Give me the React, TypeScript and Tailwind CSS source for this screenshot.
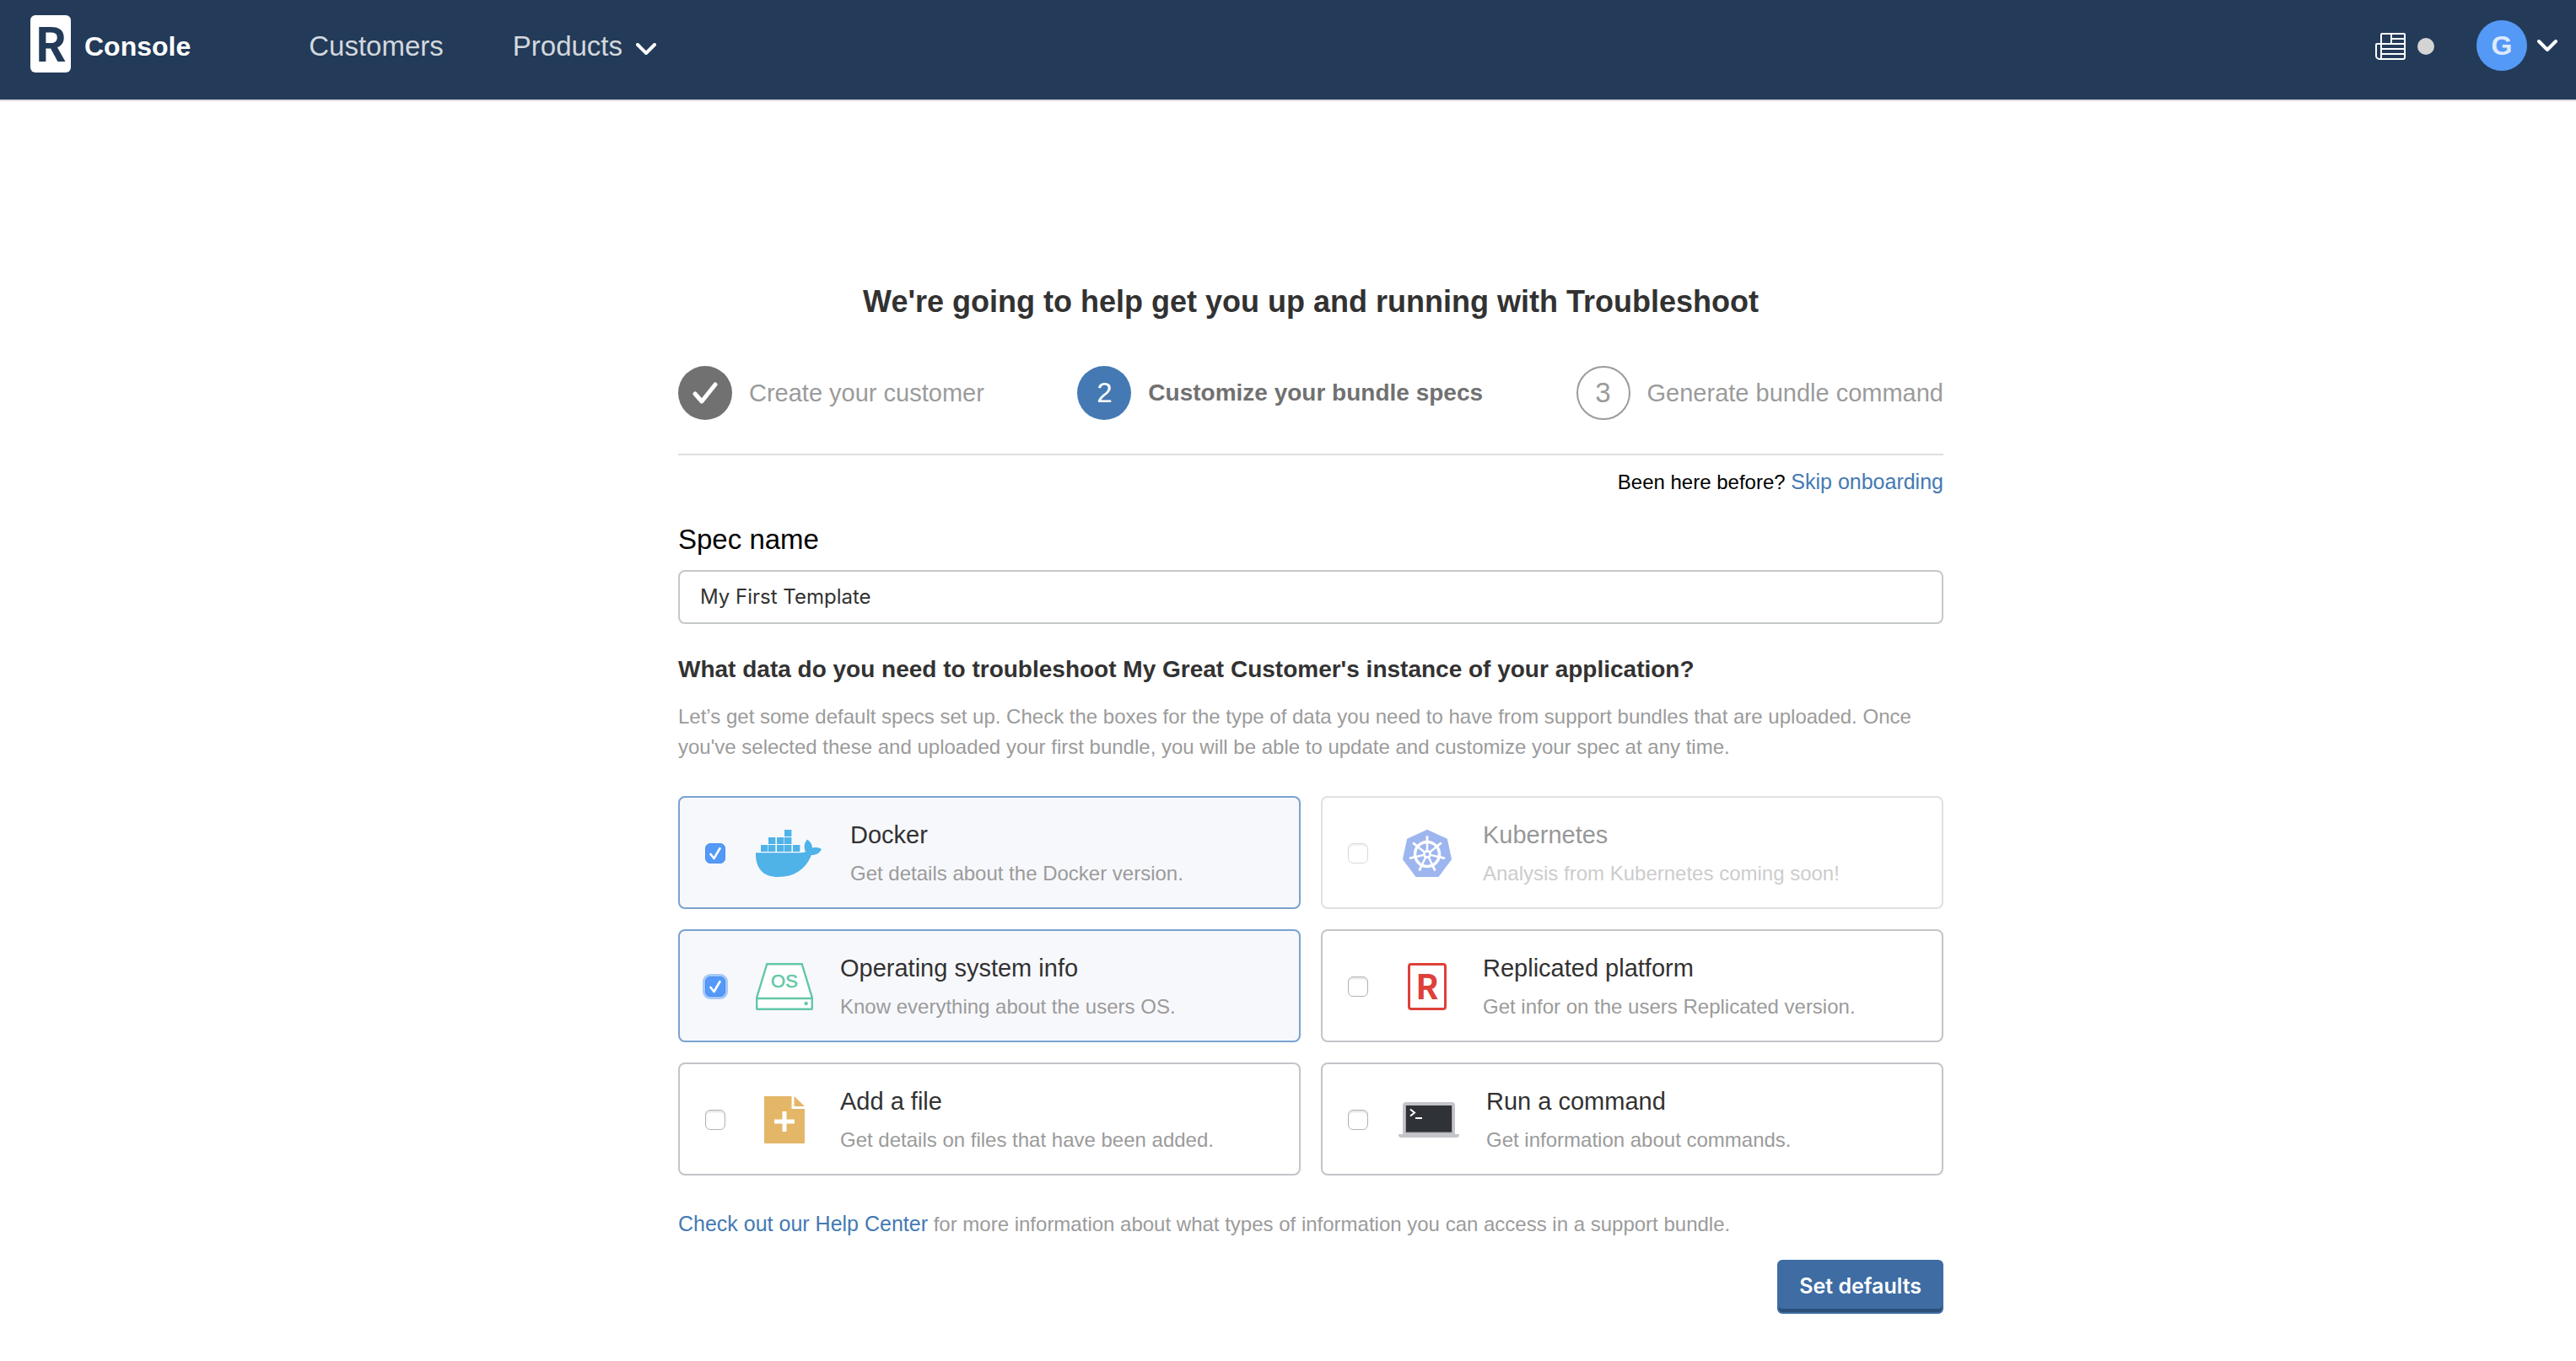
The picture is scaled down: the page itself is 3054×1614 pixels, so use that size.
import { useState } from "react";
import type { ReactNode } from "react";

function Chevron({ className }: { className: string }) {
  return (
    <svg viewBox="0 0 24 14" className={className} fill="none" stroke="white" strokeWidth="4" strokeLinecap="round" strokeLinejoin="round" aria-hidden="true">
      <path d="M2 2l10 10L22 2" />
    </svg>
  );
}

function NewsIcon() {
  return (
    <svg viewBox="0 0 36 32" className="h-8 w-9" fill="none" stroke="white" strokeWidth="2" aria-hidden="true">
      <path d="M7 31V2a1 1 0 0 1 1-1h26a1 1 0 0 1 1 1v27a2 2 0 0 1-2 2H5a4 4 0 0 1-4-4V14a1 1 0 0 1 1-1h33" />
      <path d="M19 1v12M19 7h16M7 19h28M7 25h28" />
    </svg>
  );
}

function DockerIcon() {
  const boxes = [
    [34, 0], [15, 9], [25, 9], [34, 9],
    [6, 18], [15, 18], [25, 18], [34, 18], [44, 18],
  ];
  return (
    <svg viewBox="0 0 80 56" className="h-14 w-20" fill="#50b3e8" aria-hidden="true">
      {boxes.map(([x, y]) => (
        <rect key={`${x}-${y}`} x={x} y={y} width="8.400" height="8" />
      ))}
      <path d="M0 27.300h53c2.500 0 4.500-.4 6.200-1.200C56.600 21.500 57.200 15.500 61 11.500c3.600 2.500 6 5.800 6 10 3.600-.8 8.300-.5 11 1.500-2 4.700-6.300 7.100-12 7C59.500 46.500 46 56 26.500 56 8.500 56-.5 45.500 0 27.300z" />
    </svg>
  );
}

function OsIcon() {
  return (
    <svg viewBox="0 0 68 56" className="h-14 w-[68px]" aria-hidden="true">
      <path d="M13.300 1.200h41.400L66.800 41v13.300a.5.5 0 0 1-.5.5H1.700a.5.5 0 0 1-.5-.5V41z" fill="white" stroke="#62c7a8" strokeWidth="2.400" />
      <path d="M1 42h66" stroke="#62c7a8" strokeWidth="2.600" />
      <circle cx="59.700" cy="48" r="2.200" fill="#62c7a8" />
      <text x="34" y="29" textAnchor="middle" fill="#62c7a8" stroke="#62c7a8" strokeWidth="0.500" fontSize="22" fontFamily="Liberation Sans, sans-serif">OS</text>
    </svg>
  );
}

function FileIcon() {
  return (
    <svg viewBox="0 0 48 56" className="h-14 w-12" aria-hidden="true">
      <path d="M1 0h31.500v15H48v40a1 1 0 0 1-1 1H1a1 1 0 0 1-1-1V1a1 1 0 0 1 1-1z" fill="#e4b668" />
      <path d="M35.500 0v12H48z" fill="#e4b668" />
      <path d="M24 18v24M12 30h24" stroke="white" strokeWidth="5" />
    </svg>
  );
}

function KubernetesIcon() {
  const spokes = [0, 1, 2, 3, 4, 5, 6].map((i) => (i * 360) / 7);
  return (
    <svg viewBox="0 0 58 56" className="h-14 w-[58px]" aria-hidden="true">
      <path d="M29 1L52 11.500 57 35 42 55H16L1 35 6 11.500z" fill="#3f6fe0" stroke="#3f6fe0" strokeWidth="2" strokeLinejoin="round" />
      <circle cx="29" cy="29" r="14.500" fill="none" stroke="white" strokeWidth="3.400" />
      {spokes.map((a) => (
        <g key={a} transform={`rotate(${a} 29 29)`} stroke="white" strokeLinecap="round">
          <path d="M29 14V8.500" strokeWidth="2.800" />
          <path d="M29 25V14.500" strokeWidth="2.400" />
        </g>
      ))}
      <circle cx="29" cy="29" r="3.700" fill="none" stroke="white" strokeWidth="2.800" />
    </svg>
  );
}

function ReplicatedIcon() {
  return (
    <span className="flex h-14 w-[46px] items-center justify-center rounded-sm border-3 border-[#df4038] bg-white pb-1 font-['Noto_Sans_CJK_SC',sans-serif] text-[40px] leading-none font-bold text-[#df4038]" aria-hidden="true">
      R
    </span>
  );
}

function TerminalIcon() {
  return (
    <svg viewBox="0 0 72 42" className="h-[42px] w-[72px]" aria-hidden="true">
      <path d="M5 38V4a4 4 0 0 1 4-4h54a4 4 0 0 1 4 4v34h5v1c0 2-1.500 3-3 3H3c-1.500 0-3-1-3-3v-1z" fill="#c4c4ca" />
      <path d="M8 4h56v32.500H8z" fill="#a2a3a9" />
      <path d="M9 4h54v31.500H9z" fill="#2f3237" />
      <path d="M14 8.500l5 4-5 4" fill="none" stroke="white" strokeWidth="2" />
      <path d="M20 19h8" stroke="white" strokeWidth="2" />
    </svg>
  );
}

type Item = {
  id: string;
  title: string;
  text: string;
  icon: ReactNode;
  disabled?: boolean;
  focused?: boolean;
};

const items: Item[] = [
  { id: "docker", title: "Docker", text: "Get details about the Docker version.", icon: <DockerIcon /> },
  { id: "kubernetes", title: "Kubernetes", text: "Analysis from Kubernetes coming soon!", icon: <KubernetesIcon />, disabled: true },
  { id: "os", title: "Operating system info", text: "Know everything about the users OS.", icon: <OsIcon />, focused: true },
  { id: "replicated", title: "Replicated platform", text: "Get infor on the users Replicated version.", icon: <ReplicatedIcon /> },
  { id: "file", title: "Add a file", text: "Get details on files that have been added.", icon: <FileIcon /> },
  { id: "command", title: "Run a command", text: "Get information about commands.", icon: <TerminalIcon /> },
];

function Card({ item, checked, onToggle }: { item: Item; checked: boolean; onToggle: () => void }) {
  const frame = item.disabled
    ? "border-[#c4c4c9] opacity-50"
    : checked
      ? "border-[#7aa2cf] bg-[#f7f8fc]"
      : "border-[#c4c4ca]";
  const box = checked
    ? "border-[#4a8df0] bg-[#5499f8]"
    : "border-[#b4b4b4] bg-white shadow-[inset_0_2px_2px_#e4e4e4]";
  return (
    <label htmlFor={item.id} className={`flex items-center rounded-lg border-2 pt-[26px] pb-6 pl-[30px] ${frame}`}>
      <span className="grid">
        <input
          id={item.id}
          type="checkbox"
          checked={checked}
          disabled={item.disabled}
          onChange={onToggle}
          className={`size-6 appearance-none rounded-md border [grid-area:1/1] ${box} ${item.focused ? "ring-3 ring-[#a5c8f8]" : ""}`}
        />
        {checked && (
          <svg viewBox="0 0 24 24" className="pointer-events-none size-6 [grid-area:1/1]" fill="none" stroke="white" strokeWidth="2.600" strokeLinecap="round" strokeLinejoin="round" aria-hidden="true">
            <path d="M6.500 13l4 5L17.500 6" />
          </svg>
        )}
      </span>
      <span className="ml-9 flex min-w-[68px] justify-center">{item.icon}</span>
      <span className="ml-8 flex flex-col gap-3">
        <span className="text-[29px] leading-9 text-[#323232]">{item.title}</span>
        <span className="text-2xl leading-8 text-[#9b9b9b]">{item.text}</span>
      </span>
    </label>
  );
}

export default function App() {
  const [name, setName] = useState("My First Template");
  const [checked, setChecked] = useState<Record<string, boolean>>({ docker: true, os: true });

  return (
    <div className="min-h-screen bg-white font-['Liberation_Sans',Arial,sans-serif] text-black">
      <header className="flex items-center border-b-2 border-[#dcd9df] bg-[#233b59] pt-[18px] pr-[22px] pb-[26px] pl-9">
        <a href="#home" className="flex items-center gap-4 text-white">
          <span className="mb-1.5 flex h-[68px] w-12 items-center justify-center rounded-md bg-white pb-1.5 font-['Noto_Sans_CJK_SC',sans-serif] text-[55px] leading-none font-bold text-[#233b59]">
            R
          </span>
          <span className="text-[32px] leading-10 font-bold">Console</span>
        </a>
        <nav className="ml-[140px] flex items-center gap-[82px] text-[33px] leading-10 text-[#d3d8de]">
          <a href="#customers">Customers</a>
          <button type="button" className="flex items-center gap-4">
            Products
            <Chevron className="mt-1.5 h-3.5 w-6" />
          </button>
        </nav>
        <div className="ml-auto flex items-center">
          <button type="button" aria-label="News" className="flex items-center gap-3.5">
            <NewsIcon />
            <span className="size-5 rounded-full bg-[#d4d4d4]" />
          </button>
          <button type="button" aria-label="Account" className="mb-0.5 ml-[50px] flex items-center gap-3">
            <span className="flex size-[60px] items-center justify-center rounded-full bg-[#5499f5] text-[32px] leading-10 font-bold text-[#dde9fd]">G</span>
            <Chevron className="h-3.5 w-6" />
          </button>
        </div>
      </header>

      <main className="pt-[216px] pb-14 pl-[54px]">
        <div className="mx-auto flex w-full max-w-[1500px] flex-col">
          <h1 className="text-center text-4xl leading-11 font-bold text-[#323232]">
            We're going to help get you up and running with Troubleshoot
          </h1>

          <ol className="mt-[54px] flex justify-between border-b-2 border-[#dfdfdf] pb-10 text-[29px] leading-9 text-[#9b9b9b]">
            <li className="flex items-center gap-5">
              <span className="flex size-16 items-center justify-center rounded-full bg-[#717171]">
                <svg viewBox="0 0 30 26" className="h-[26px] w-[30px]" fill="none" stroke="white" strokeWidth="5" strokeLinecap="round" strokeLinejoin="round" aria-hidden="true">
                  <path d="M3 14l8 9L27 3" />
                </svg>
              </span>
              Create your customer
            </li>
            <li className="flex items-center gap-5 text-[28px] font-bold text-[#717171]" aria-current="step">
              <span className="flex size-16 items-center justify-center rounded-full bg-[#4479b3] text-[33px] font-normal text-white">2</span>
              Customize your bundle specs
            </li>
            <li className="flex items-center gap-5">
              <span className="flex size-16 items-center justify-center rounded-full border-2 border-[#9b9b9b] text-[33px]">3</span>
              Generate bundle command
            </li>
          </ol>

          <p className="mt-4 text-right text-2xl leading-8">
            Been here before?{" "}
            <a href="#skip" className="text-[25px] leading-none text-[#4479b3]">Skip onboarding</a>
          </p>

          <label htmlFor="spec-name" className="mt-8 text-[33px] leading-10">Spec name</label>
          <input
            id="spec-name"
            type="text"
            value={name}
            onChange={(e) => setName(e.target.value)}
            className="mt-4 h-16 rounded-lg border-2 border-[#c4c8ca] px-6 pb-0.5 font-['Inter',sans-serif] text-2xl text-[#323232] outline-none"
          />

          <h2 className="mt-9 text-[28px] leading-9 font-bold text-[#323232]">
            What data do you need to troubleshoot My Great Customer's instance of your application?
          </h2>
          <p className="mt-5 text-2xl leading-9 text-[#9b9b9b]">
            Let’s get some default specs set up. Check the boxes for the type of data you need to have from support bundles that are uploaded. Once
            you've selected these and uploaded your first bundle, you will be able to update and customize your spec at any time.
          </p>

          <div className="mt-10 grid grid-cols-2 gap-6">
            {items.map((item) => (
              <Card
                key={item.id}
                item={item}
                checked={!!checked[item.id]}
                onToggle={() => setChecked((c) => ({ ...c, [item.id]: !c[item.id] }))}
              />
            ))}
          </div>

          <p className="mt-[42px] text-2xl leading-8 text-[#9b9b9b]">
            <a href="#help" className="text-[25px] leading-none text-[#4479b3]">Check out our Help Center</a>{" "}
            for more information about what types of information you can access in a support bundle.
          </p>
          <button
            type="button"
            className="mt-[26px] h-16 self-end rounded-md border-2 border-[#3e6ca3] bg-[#3e6ca3] px-6 font-['Inter',sans-serif] text-[25px] font-semibold text-white shadow-[inset_0_-4px_0_#2c5078]"
          >
            Set defaults
          </button>
        </div>
      </main>
    </div>
  );
}
